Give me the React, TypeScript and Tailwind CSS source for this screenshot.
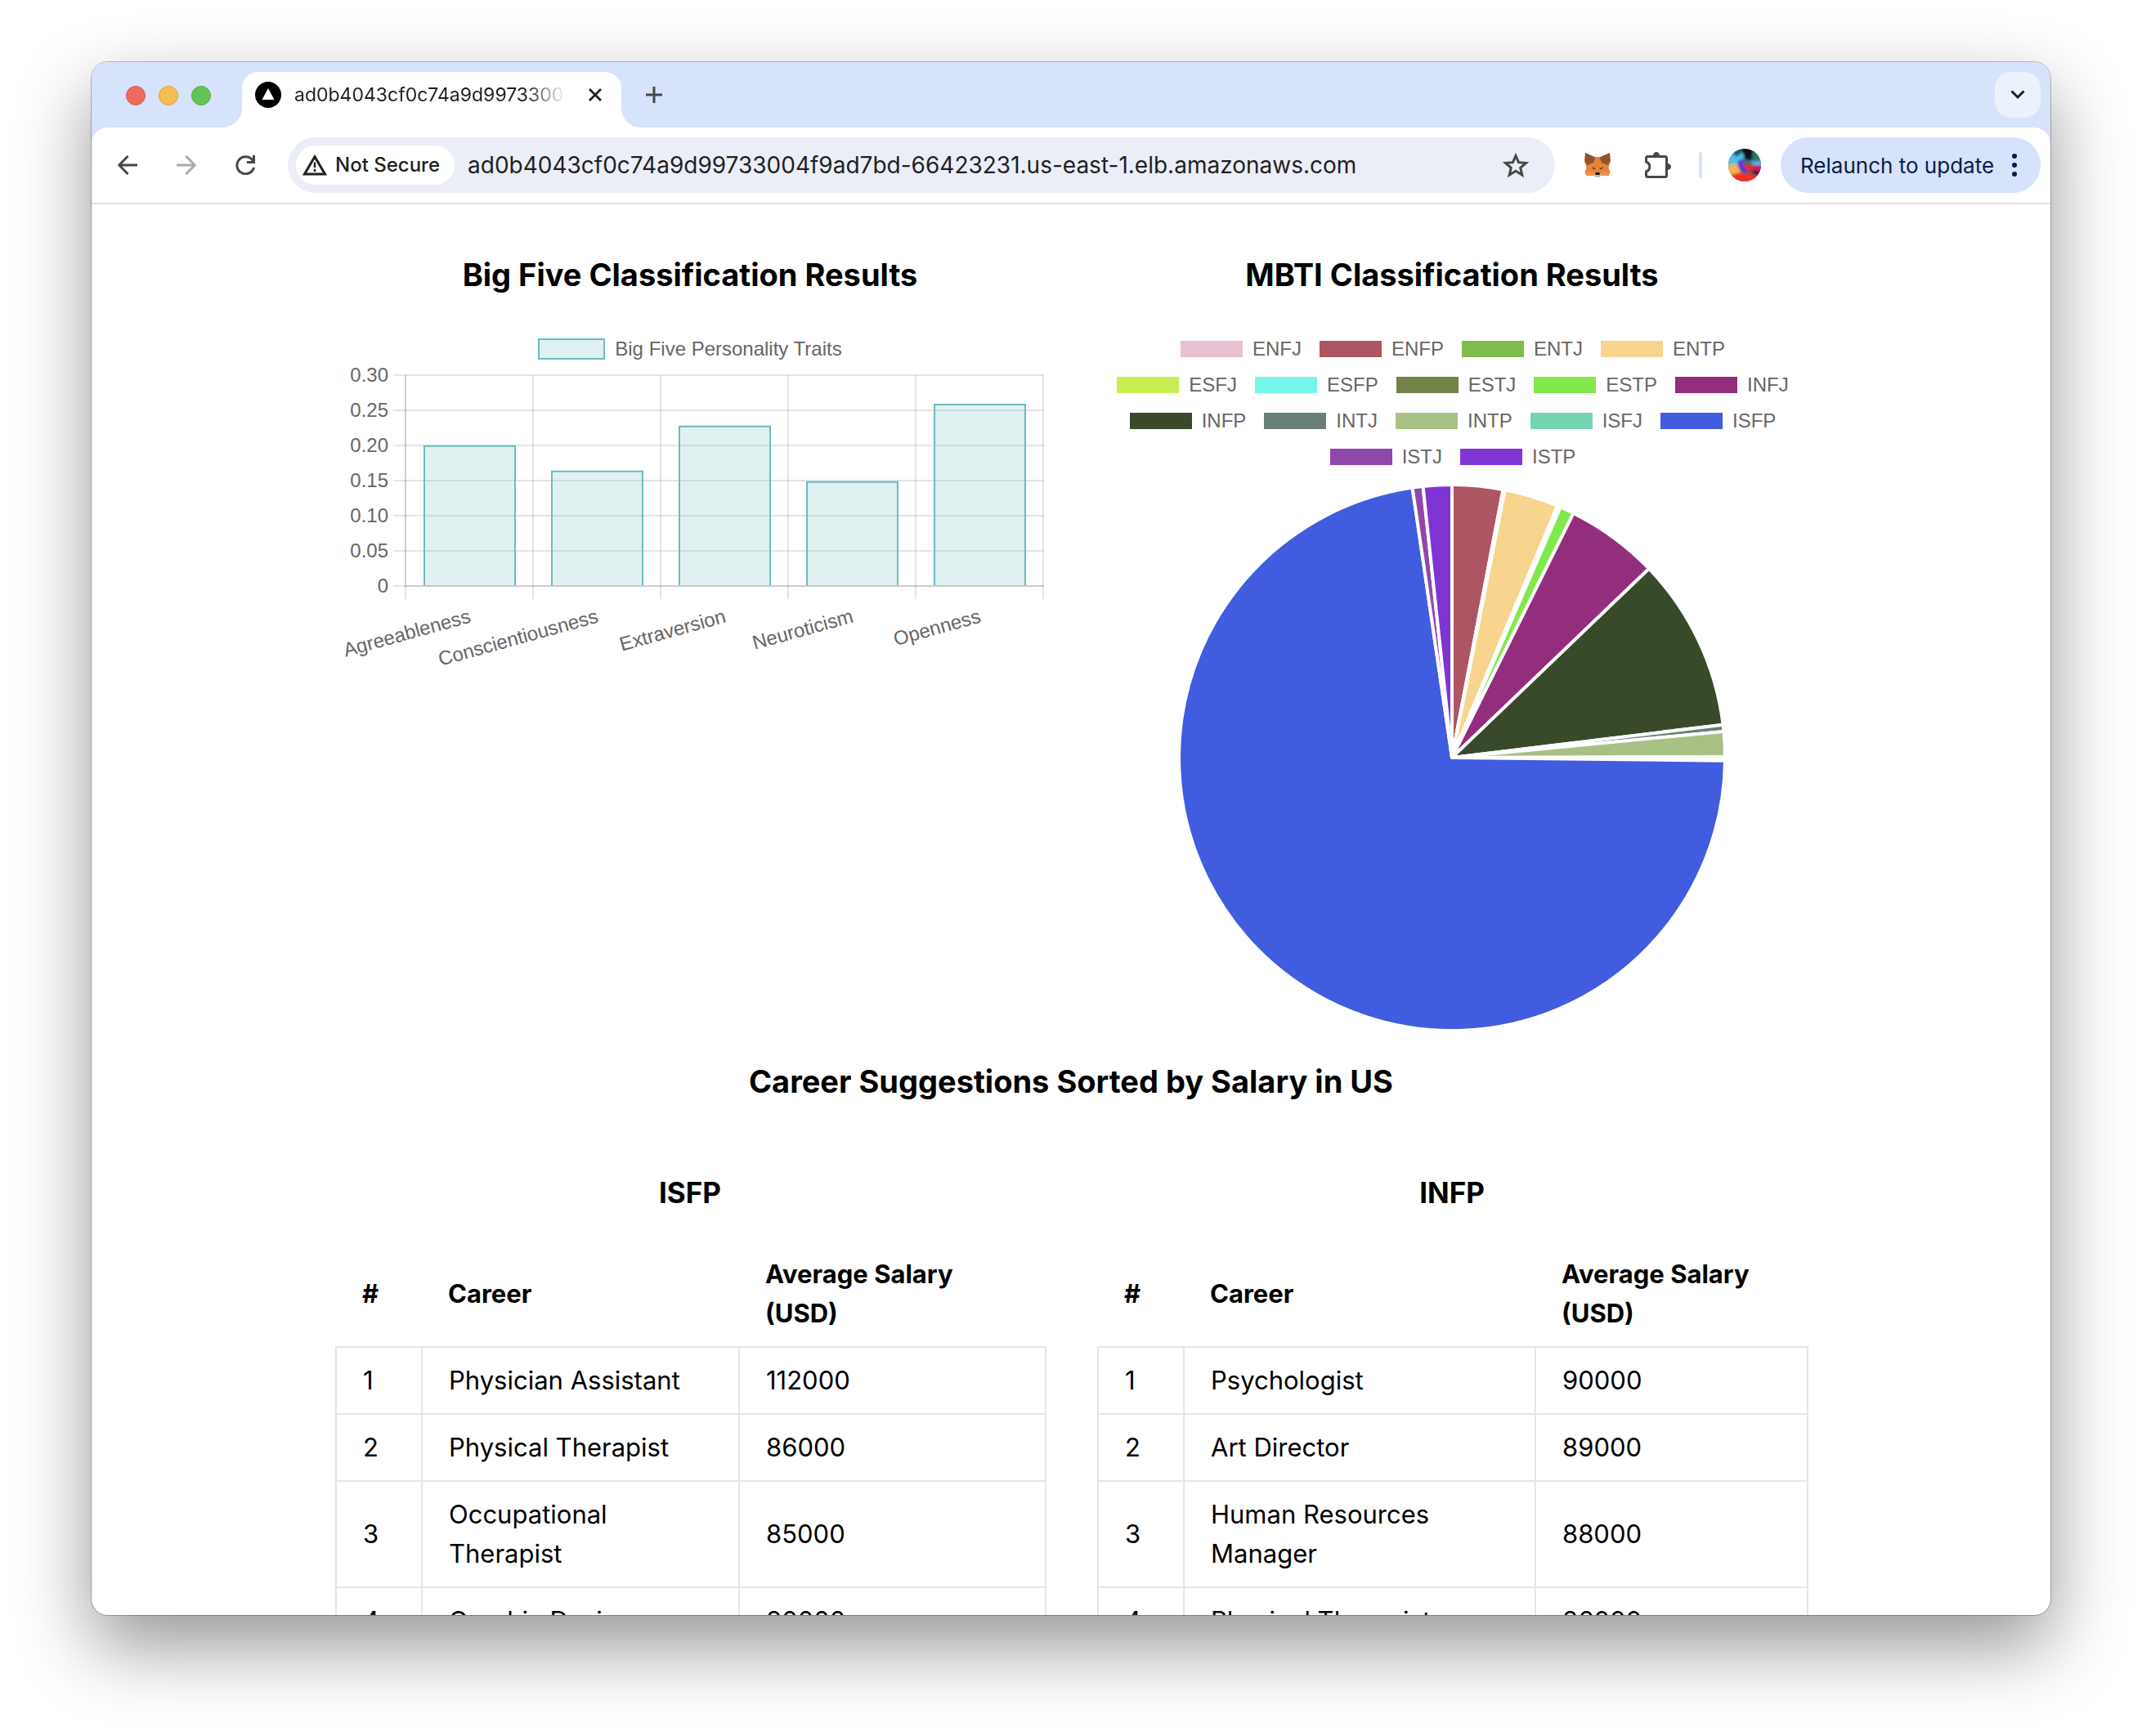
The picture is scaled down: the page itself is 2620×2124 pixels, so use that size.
import React from "react";

const BARS = [
  { label: "Agreeableness", value: 0.199 },
  { label: "Conscientiousness", value: 0.163 },
  { label: "Extraversion", value: 0.227 },
  { label: "Neuroticism", value: 0.148 },
  { label: "Openness", value: 0.258 },
];

const TICKS = ["0.30", "0.25", "0.20", "0.15", "0.10", "0.05", "0"];

type Slice = { name: string; color: string; start: number; end: number };

const SLICES: Slice[] = [
  { name: "ENFJ", color: "#eac1d2", start: 0, end: 0 },
  { name: "ENFP", color: "#ad5563", start: 0, end: 10.8 },
  { name: "ENTJ", color: "#7fbd4b", start: 10.8, end: 11.17 },
  { name: "ENTP", color: "#f8d58f", start: 11.17, end: 22.72 },
  { name: "ESFJ", color: "#c5ef52", start: 22.72, end: 22.95 },
  { name: "ESFP", color: "#74f6ea", start: 22.95, end: 23.18 },
  { name: "ESTJ", color: "#738249", start: 23.18, end: 23.41 },
  { name: "ESTP", color: "#80e94b", start: 23.41, end: 26.42 },
  { name: "INFJ", color: "#932e7d", start: 26.42, end: 46.18 },
  { name: "INFP", color: "#384a2a", start: 46.18, end: 83.07 },
  { name: "INTJ", color: "#697f76", start: 83.07, end: 84.49 },
  { name: "INTP", color: "#a9c085", start: 84.49, end: 89.83 },
  { name: "ISFJ", color: "#74d4b0", start: 89.83, end: 90.23 },
  { name: "ISFP", color: "#415cde", start: 90.63, end: 351.66 },
  { name: "ISTJ", color: "#8f48a8", start: 351.66, end: 353.9 },
  { name: "ISTP", color: "#7f34d4", start: 353.9, end: 360 },
];

const LEGEND_ROWS = [SLICES.slice(0, 4), SLICES.slice(4, 9), SLICES.slice(9, 14), SLICES.slice(14)];

function slicePath(cx: number, cy: number, r: number, start: number, end: number) {
  const at = (deg: number) => {
    const a = (deg * Math.PI) / 180;
    return `${(cx + r * Math.sin(a)).toFixed(2)} ${(cy - r * Math.cos(a)).toFixed(2)}`;
  };
  return `M${cx} ${cy}L${at(start)}A${r} ${r} 0 ${end - start > 180 ? 1 : 0} 1 ${at(end)}Z`;
}

function BarChart() {
  const left = 86;
  const step = 156;
  const bottom = 305;
  return (
    <svg viewBox="0 0 868 420" className="block h-auto w-full" role="img" aria-label="Big Five Personality Traits">
      <g stroke="#000" strokeOpacity={0.1} strokeWidth={2}>
        {TICKS.map((t, i) => (
          <path key={t} d={`M71 ${47 + i * 43}H867`} />
        ))}
        {[0, 1, 2, 3, 4, 5].map((i) => (
          <path key={i} d={`M${left + i * step} 47V321`} />
        ))}
        <path d="M86 47V305H867" fill="none" />
      </g>
      {BARS.map((b, i) => {
        const x = left + i * step + 23;
        const h = (b.value / 0.3) * 258;
        return (
          <g key={b.label}>
            <rect x={x} y={bottom - h - 1} width={111} height={h + 1} fill="#67b9bb" fillOpacity={0.2} />
            <path d={`M${x} ${bottom - 1}V${bottom - h}H${x + 111}V${bottom - 1}`} fill="none" stroke="#6bbcbe" strokeWidth={2} />
          </g>
        );
      })}
      <g fill="#666" fontFamily="'Liberation Sans', Arial, sans-serif" fontSize={24} textAnchor="end">
        {TICKS.map((t, i) => (
          <text key={t} x={65} y={55 + i * 43}>
            {t}
          </text>
        ))}
        {BARS.map((b, i) => (
          <text key={b.label} transform={`translate(${167 + i * step} 349) rotate(-15.5)`}>
            {b.label}
          </text>
        ))}
      </g>
    </svg>
  );
}

function PieChart() {
  return (
    <svg viewBox="0 0 868 672" className="block h-auto w-full" role="img" aria-label="MBTI types">
      {SLICES.filter((s) => s.end > s.start).map((s) => (
        <path
          key={s.name}
          d={slicePath(434, 336, 334, s.start, s.end)}
          fill={s.color}
          stroke="#fff"
          strokeWidth={4}
          strokeLinejoin="round"
        />
      ))}
    </svg>
  );
}

type Row = [string, string];

function CareerTable({ type, rows, cols }: { type: string; rows: Row[]; cols: string[] }) {
  return (
    <section>
      <h3 className="mb-8 text-center text-[35px] leading-[56px] font-bold">{type}</h3>
      <table className="w-full table-fixed border-collapse text-left text-[31px] leading-[48px]">
        <colgroup>
          {cols.map((c) => (
            <col key={c} className={c} />
          ))}
        </colgroup>
        <thead>
          <tr>
            <th className="px-8 py-4 font-bold">#</th>
            <th className="px-8 py-4 font-bold">Career</th>
            <th className="px-8 py-4 font-bold">
              Average Salary
              <br />
              (USD)
            </th>
          </tr>
        </thead>
        <tbody>
          {rows.map(([career, salary], i) => (
            <tr key={career}>
              <td className="border-2 border-[#e5e5ea] px-8 py-4">{i + 1}</td>
              <td className="border-2 border-[#e5e5ea] px-8 py-4">{career}</td>
              <td className="border-2 border-[#e5e5ea] px-8 py-4">{salary}</td>
            </tr>
          ))}
        </tbody>
      </table>
    </section>
  );
}

function TabStrip() {
  return (
    <div className="flex h-20 items-end bg-[#d7e2fb] pr-3 pl-[42px]">
      <div className="mr-[14px] flex h-20 items-center gap-4 pt-px">
        <button aria-label="Close window" className="size-6 rounded-full border border-[#d65a50] bg-[#ed6a5f]" />
        <button aria-label="Minimise window" className="size-6 rounded-full border border-[#dba43f] bg-[#f6be50]" />
        <button aria-label="Zoom window" className="size-6 rounded-full border border-[#51ab44] bg-[#61c555]" />
      </div>
      <div className="flex items-end">
        <svg viewBox="0 0 24 24" className="size-6 fill-white" aria-hidden="true">
          <path d="M24 0V24H0A24 24 0 0 0 24 0Z" />
        </svg>
        <div className="flex h-[68px] w-[464px] items-center rounded-t-[20px] bg-white pr-5 pb-3 pl-4">
          <svg viewBox="0 0 32 32" className="size-8 shrink-0" aria-hidden="true">
            <circle cx="16" cy="16" r="16" fill="#000" />
            <path d="M16 8L23.5 22H8.500Z" fill="#fff" />
          </svg>
          <span className="ml-4 w-[332px] overflow-hidden bg-linear-to-r from-[#1f1f1f] from-85% to-transparent bg-clip-text text-[23px] leading-8 whitespace-nowrap text-transparent">
            ad0b4043cf0c74a9d99733004f9ad7bd
          </span>
          <button aria-label="Close tab" className="ml-auto flex size-6 items-center justify-center">
            <svg viewBox="0 0 16 16" className="size-4" fill="none" stroke="#1f1f1f" strokeWidth="2.800">
              <path d="M1 1L15 15M15 1L1 15" />
            </svg>
          </button>
        </div>
        <svg viewBox="0 0 24 24" className="size-6 fill-white" aria-hidden="true">
          <path d="M0 0V24H24A24 24 0 0 1 0 0Z" />
        </svg>
      </div>
      <button aria-label="New tab" className="mb-[30px] ml-[6px] flex size-5 items-center justify-center">
        <svg viewBox="0 0 20 20" className="size-5" fill="none" stroke="#474747" strokeWidth="3">
          <path d="M10 0V20M0 10H20" />
        </svg>
      </button>
      <button aria-label="Search tabs" className="mb-3 ml-auto flex size-14 items-center justify-center rounded-[20px] bg-[#ebf2fc]">
        <svg viewBox="0 0 18 12" className="h-3 w-[18px]" fill="none" stroke="#1f1f1f" strokeWidth="3">
          <path d="M1.500 1.500L9 9L16.500 1.500" />
        </svg>
      </button>
    </div>
  );
}

function Fox() {
  return (
    <svg viewBox="0 0 32 30" className="h-[30px] w-8" aria-hidden="true">
      <path d="M1 0L12 5H20L31 0L32 10L29.500 18L31.500 24L29.500 28L21 27L18 30H14L11 27L2.500 28L0.500 24L2.500 18L0 10Z" fill="#e8823a" />
      <path d="M1 0L13.500 5.500L11 12L4 15L0.500 11Z" fill="#8e5430" />
      <path d="M31 0L18.500 5.500L21 12L28 15L31.500 11Z" fill="#8e5430" />
      <path d="M0.500 24L10 23L12 28L2.500 28Z" fill="#f29148" />
      <path d="M31.500 24L22 23L20 28L29.500 28Z" fill="#f29148" />
      <path d="M9 17L14 19.500L11 20Z" fill="#3a3030" />
      <path d="M23 17L18 19.500L21 20Z" fill="#3a3030" />
      <path d="M11 27L13.500 24H18.500L21 27L18 30H14Z" fill="#cfc0b4" />
      <path d="M13.500 24H18.500L19 27H13Z" fill="#1c1512" />
    </svg>
  );
}

function Avatar() {
  return (
    <svg viewBox="0 0 40 40" className="size-10" aria-hidden="true">
      <defs>
        <clipPath id="avatarClip">
          <circle cx="20" cy="20" r="20" />
        </clipPath>
        <filter id="avatarBlur" x="-20%" y="-20%" width="140%" height="140%">
          <feGaussianBlur stdDeviation="1.500" />
        </filter>
      </defs>
      <g clipPath="url(#avatarClip)">
        <rect width="40" height="40" fill="#3a6f86" />
        <g filter="url(#avatarBlur)">
          <path d="M-4 -4H20L18 12L10 22L-4 24Z" fill="#4fc0e4" />
          <path d="M4 4L14 -2L18 4L10 10Z" fill="#20566e" />
          <path d="M14 -4H34L30 14L22 13L18 6Z" fill="#0b0a1c" />
          <path d="M30 0L44 8V15L29 14Z" fill="#2f7a5c" />
          <path d="M27 16L44 14V22L32 22Z" fill="#5ab2e0" />
          <path d="M-2 20L10 18L16 29L2 34Z" fill="#efb648" />
          <path d="M11 15L19 12L17 20L25 30L14 27Z" fill="#5a2ce0" />
          <path d="M30 20L44 20L42 30L30 26Z" fill="#c01a6a" />
          <path d="M17 18L27 19L36 32L24 28Z" fill="#e2301f" />
          <path d="M27 26L40 28L35 34Z" fill="#4a0b26" />
          <path d="M-2 33L14 29L28 31L42 34V44H-2Z" fill="#ee3320" />
        </g>
      </g>
    </svg>
  );
}

function Toolbar() {
  return (
    <div className="bg-[#d7e2fb]">
      <div className="flex h-[94px] items-center rounded-t-[20px] border-b-2 border-[#e1e1e1] bg-white pr-3 pl-8">
        <button aria-label="Back" className="size-6">
          <svg viewBox="0 0 24 24" className="size-6" fill="none" stroke="#474747" strokeWidth="3">
            <path d="M24 12H2M12.500 1L1.800 12L12.500 23" />
          </svg>
        </button>
        <button aria-label="Forward" className="ml-12 size-6" disabled>
          <svg viewBox="0 0 24 24" className="size-6" fill="none" stroke="#ababab" strokeWidth="3">
            <path d="M0 12H22M11.500 1L22.200 12L11.500 23" />
          </svg>
        </button>
        <button aria-label="Reload" className="ml-12 size-6">
          <svg viewBox="0 0 24 24" className="size-6" fill="none" stroke="#474747" strokeWidth="3">
            <path d="M22.500 15A10.500 10.500 0 1 1 20.500 5.500L22 8" />
            <path d="M22.500 0V8.500H14" />
          </svg>
        </button>
        <div className="ml-10 flex h-[68px] flex-1 items-center rounded-full bg-[#ebeef7] pr-8 pl-[10px]">
          <button className="flex h-12 items-center gap-[10px] rounded-full bg-white pr-[18px] pl-2 text-[24px] font-medium text-[#1f1f1f]">
            <svg viewBox="0 0 30 26" className="h-[26px] w-[30px]" fill="none" stroke="#1f1f1f" strokeWidth="3">
              <path d="M15 2.800L27.500 24H2.500Z" />
              <path d="M15 9.500V16M15 18V21" strokeWidth="2.500" />
            </svg>
            Not Secure
          </button>
          <input
            aria-label="Address"
            readOnly
            value="ad0b4043cf0c74a9d99733004f9ad7bd-66423231.us-east-1.elb.amazonaws.com"
            className="ml-4 min-w-0 flex-1 bg-transparent text-[28px] text-[#1f1f1f] outline-none"
          />
          <button aria-label="Bookmark this tab" className="size-8">
            <svg viewBox="0 0 32 30" className="size-8" fill="none" stroke="#474747" strokeWidth="3">
              <path d="M16 3.500L19.500 11.700L28.500 12.500L21.700 18.300L23.800 27L16 22.300L8.200 27L10.300 18.300L3.500 12.500L12.500 11.700Z" />
            </svg>
          </button>
        </div>
        <button aria-label="Wallet extension" className="ml-9">
          <Fox />
        </button>
        <button aria-label="Extensions" className="ml-[42px] size-8">
          <svg viewBox="0 0 32 32" className="size-8" aria-hidden="true">
            <path
              d="M3.500 5.500H24.500Q26.500 5.500 26.500 7.500V28.500Q26.500 30.500 24.500 30.500H3.500Q1.500 30.500 1.500 28.500V24Q5.800 22.500 5.800 18T1.500 12V7.500Q1.500 5.500 3.500 5.500Z"
              fill="none"
              stroke="#474747"
              strokeWidth="3"
            />
            <path d="M10 4.500A4 4.500 0 0 1 18 4.500ZM27.500 14A4.500 4 0 0 1 27.500 22Z" fill="#474747" />
          </svg>
        </button>
        <div className="ml-[34px] h-8 w-1 rounded-full bg-[#d7e2fb]" />
        <button aria-label="Profile" className="ml-8 size-10">
          <Avatar />
        </button>
        <button className="ml-6 flex h-[68px] w-[318px] items-center justify-between rounded-full bg-[#d7e2fb] pr-7 pl-6 text-[26px] text-[#061d4c]">
          Relaunch to update
          <svg viewBox="0 0 8 28" className="h-7 w-2" fill="#061d4c" aria-hidden="true">
            <circle cx="4" cy="3" r="3" />
            <circle cx="4" cy="14" r="3" />
            <circle cx="4" cy="25" r="3" />
          </svg>
        </button>
      </div>
    </div>
  );
}

export default function App() {
  return (
    <div className="h-screen overflow-hidden bg-white px-28 pt-[76px] pb-[148px] font-['Inter',sans-serif] text-black">
      <div className="flex h-full flex-col overflow-hidden rounded-[20px] bg-white shadow-[0_0_0_1px_rgba(0,0,0,0.25),0_38px_92px_rgba(0,0,0,0.42)]">
        <TabStrip />
        <Toolbar />
        <main className="mx-auto min-h-0 w-full max-w-[1808px] flex-1 overflow-hidden px-1 pt-14">
          <div className="grid grid-cols-2 gap-16">
            <section>
              <h2 className="text-center text-[38px] leading-[60px] font-bold">Big Five Classification Results</h2>
              <div className="mt-[46px] flex h-[30px] items-center justify-center gap-3 font-['Liberation_Sans',sans-serif] text-2xl text-[#666]">
                <span className="h-[26px] w-[82px] border-2 border-[#6bbcbe] bg-[#e0f1f1]" />
                Big Five Personality Traits
              </div>
              <div className="-mt-[30px]">
                <BarChart />
              </div>
            </section>
            <section>
              <h2 className="text-center text-[38px] leading-[60px] font-bold">MBTI Classification Results</h2>
              <ul className="mt-[39px] mb-[10px] font-['Liberation_Sans',sans-serif] text-2xl text-[#666]">
                {LEGEND_ROWS.map((row) => (
                  <li key={row[0].name} className="flex h-11 items-center justify-center gap-5">
                    {row.map((s) => (
                      <span key={s.name} className="flex items-center gap-[10px]">
                        <span className="h-6 w-20 border-2 border-white" style={{ backgroundColor: s.color }} />
                        {s.name}
                      </span>
                    ))}
                  </li>
                ))}
              </ul>
              <PieChart />
            </section>
          </div>
          <h2 className="mt-[30px] text-center text-[38px] leading-[60px] font-bold">
            Career Suggestions Sorted by Salary in US
          </h2>
          <div className="mt-[78px] grid grid-cols-2 gap-16">
            <CareerTable
              type="ISFP"
              cols={["w-[105px]", "w-[388px]", "w-[375px]"]}
              rows={[
                ["Physician Assistant", "112000"],
                ["Physical Therapist", "86000"],
                ["Occupational Therapist", "85000"],
                ["Graphic Designer", "80000"],
              ]}
            />
            <CareerTable
              type="INFP"
              cols={["w-[105px]", "w-[430px]", "w-[333px]"]}
              rows={[
                ["Psychologist", "90000"],
                ["Art Director", "89000"],
                ["Human Resources Manager", "88000"],
                ["Physical Therapist", "86000"],
              ]}
            />
          </div>
        </main>
      </div>
    </div>
  );
}
